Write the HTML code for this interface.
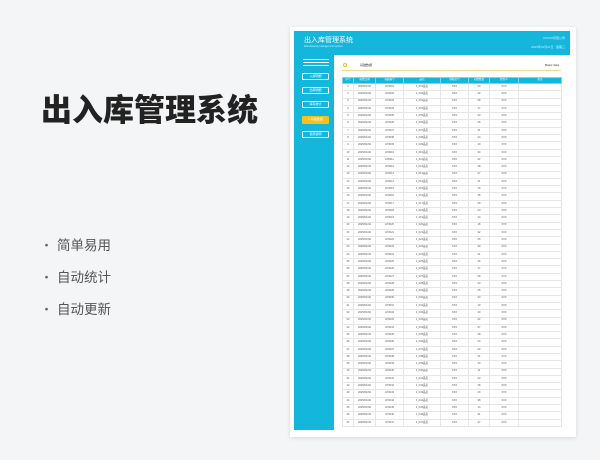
<!DOCTYPE html><html><head><meta charset="utf-8"><style>
*{margin:0;padding:0;box-sizing:border-box}
body{width:600px;height:460px;background:#f4f5f7;position:relative;overflow:hidden;font-family:"Liberation Sans","Noto Sans CJK SC",sans-serif}
.t{position:absolute;left:41px;top:85px;font-size:31px;font-weight:900;color:#222;font-family:"Noto Sans CJK SC",sans-serif}
.b{position:absolute;left:40px;font-size:13.5px;color:#555;font-family:"Noto Sans CJK SC",sans-serif}
.b span{display:inline-block;width:17px;font-size:13px;color:#666}
.card{position:absolute;left:290px;top:27px;width:286px;height:410px;background:#fff;box-shadow:0 1px 4px rgba(0,0,0,.12)}
.hd{position:absolute;left:294px;top:31px;width:276px;height:24px;background:#15b6dc}
.sb{position:absolute;left:294px;top:55px;width:40px;height:375px;background:#15b6dc}
.btn{position:absolute;left:302px;width:27px;height:7px;border:1px solid #fff;border-radius:1.5px;color:#fff;font-size:3px;text-align:center;line-height:5px}
table{position:absolute;left:342px;top:77px;width:219px;border-collapse:collapse;font-size:2.6px;color:#555;table-layout:fixed;line-height:1}
td,th{height:7.3px;border:0.4px solid #e6e6e6;text-align:center;font-weight:normal;white-space:nowrap;overflow:hidden;line-height:1}
th{background:#15b6dc;color:#fff;height:6px;border-color:#7fd6ec}
</style></head><body>
<div class="t">出入库管理系统</div>
<div class="b" style="top:234px"><span>•</span>简单易用</div>
<div class="b" style="top:266px"><span>•</span>自动统计</div>
<div class="b" style="top:298px"><span>•</span>自动更新</div>
<div class="card"></div>
<div class="hd"><div style="position:absolute;left:10px;top:4px;color:#fff;font-size:7px">出入库管理系统</div><div style="position:absolute;left:10px;top:14px;color:#cdeff8;font-size:2.5px">Warehousing management system</div><div style="position:absolute;right:5px;top:5px;color:#cdeff8;font-size:3px">XXXXX有限公司</div><div style="position:absolute;right:5px;top:14px;color:#cdeff8;font-size:3px">2025年01月01日 &nbsp; 星期三</div></div>
<div class="sb"></div>
<div style="position:absolute;left:303px;top:59px;width:26px;height:1px;background:#fff"></div>
<div style="position:absolute;left:303px;top:62px;width:26px;height:1px;background:#fff"></div>
<div style="position:absolute;left:303px;top:65px;width:26px;height:1px;background:#fff"></div>
<div class="btn" style="top:73px">入库明细</div>
<div class="btn" style="top:87px">出库明细</div>
<div class="btn" style="top:101px">库存统计</div>
<div class="btn" style="top:116px;background:#f5c21b;border-color:#f5c21b;height:8px">□ 基础数据</div>
<div class="btn" style="top:131px">使用说明</div>
<div style="position:absolute;left:343px;top:63px;width:4px;height:4px;border-radius:50%;border:1px solid #f5c21b"></div>
<div style="position:absolute;left:360px;top:63px;font-size:3px;color:#333">基础数据</div>
<div style="position:absolute;left:545px;top:63px;font-size:3px;color:#333">Basic data</div>
<div style="position:absolute;left:342px;top:70px;width:219px;height:1px;background:#f3dc8a"></div>
<table>
<colgroup><col style="width:11px"><col style="width:22px"><col style="width:28px"><col style="width:37px"><col style="width:28px"><col style="width:21px"><col style="width:29px"><col style="width:43px"></colgroup>
<tr><th>序号</th><th>初始日期</th><th>商品编号</th><th>品名</th><th>规格型号</th><th>初始数量</th><th>经办人</th><th>备注</th></tr>
<tr><td>1</td><td>2025/01/02</td><td>LP0001</td><td>1_001品名</td><td>XXX</td><td>29</td><td>XXX</td><td></td></tr>
<tr><td>2</td><td>2025/01/02</td><td>LP0002</td><td>1_002品名</td><td>XXX</td><td>42</td><td>XXX</td><td></td></tr>
<tr><td>3</td><td>2025/01/02</td><td>LP0003</td><td>1_003品名</td><td>XXX</td><td>28</td><td>XXX</td><td></td></tr>
<tr><td>4</td><td>2025/01/02</td><td>LP0004</td><td>1_004品名</td><td>XXX</td><td>17</td><td>XXX</td><td></td></tr>
<tr><td>5</td><td>2025/01/02</td><td>LP0005</td><td>1_005品名</td><td>XXX</td><td>43</td><td>XXX</td><td></td></tr>
<tr><td>6</td><td>2025/01/02</td><td>LP0006</td><td>1_006品名</td><td>XXX</td><td>26</td><td>XXX</td><td></td></tr>
<tr><td>7</td><td>2025/01/02</td><td>LP0007</td><td>1_007品名</td><td>XXX</td><td>31</td><td>XXX</td><td></td></tr>
<tr><td>8</td><td>2025/01/02</td><td>LP0008</td><td>1_008品名</td><td>XXX</td><td>24</td><td>XXX</td><td></td></tr>
<tr><td>9</td><td>2025/01/02</td><td>LP0009</td><td>1_009品名</td><td>XXX</td><td>19</td><td>XXX</td><td></td></tr>
<tr><td>10</td><td>2025/01/02</td><td>LP0010</td><td>1_010品名</td><td>XXX</td><td>34</td><td>XXX</td><td></td></tr>
<tr><td>11</td><td>2025/01/02</td><td>LP0011</td><td>1_011品名</td><td>XXX</td><td>22</td><td>XXX</td><td></td></tr>
<tr><td>12</td><td>2025/01/02</td><td>LP0012</td><td>1_012品名</td><td>XXX</td><td>38</td><td>XXX</td><td></td></tr>
<tr><td>13</td><td>2025/01/02</td><td>LP0013</td><td>1_013品名</td><td>XXX</td><td>27</td><td>XXX</td><td></td></tr>
<tr><td>14</td><td>2025/01/02</td><td>LP0014</td><td>1_014品名</td><td>XXX</td><td>41</td><td>XXX</td><td></td></tr>
<tr><td>15</td><td>2025/01/02</td><td>LP0015</td><td>1_015品名</td><td>XXX</td><td>16</td><td>XXX</td><td></td></tr>
<tr><td>16</td><td>2025/01/02</td><td>LP0016</td><td>1_016品名</td><td>XXX</td><td>35</td><td>XXX</td><td></td></tr>
<tr><td>17</td><td>2025/01/02</td><td>LP0017</td><td>1_017品名</td><td>XXX</td><td>29</td><td>XXX</td><td></td></tr>
<tr><td>18</td><td>2025/01/02</td><td>LP0018</td><td>1_018品名</td><td>XXX</td><td>23</td><td>XXX</td><td></td></tr>
<tr><td>19</td><td>2025/01/02</td><td>LP0019</td><td>1_019品名</td><td>XXX</td><td>44</td><td>XXX</td><td></td></tr>
<tr><td>20</td><td>2025/01/02</td><td>LP0020</td><td>1_020品名</td><td>XXX</td><td>18</td><td>XXX</td><td></td></tr>
<tr><td>21</td><td>2025/01/02</td><td>LP0021</td><td>1_021品名</td><td>XXX</td><td>32</td><td>XXX</td><td></td></tr>
<tr><td>22</td><td>2025/01/02</td><td>LP0022</td><td>1_022品名</td><td>XXX</td><td>26</td><td>XXX</td><td></td></tr>
<tr><td>23</td><td>2025/01/02</td><td>LP0023</td><td>1_023品名</td><td>XXX</td><td>39</td><td>XXX</td><td></td></tr>
<tr><td>24</td><td>2025/01/02</td><td>LP0024</td><td>1_024品名</td><td>XXX</td><td>21</td><td>XXX</td><td></td></tr>
<tr><td>25</td><td>2025/01/02</td><td>LP0025</td><td>1_025品名</td><td>XXX</td><td>36</td><td>XXX</td><td></td></tr>
<tr><td>26</td><td>2025/01/02</td><td>LP0026</td><td>1_026品名</td><td>XXX</td><td>17</td><td>XXX</td><td></td></tr>
<tr><td>27</td><td>2025/01/02</td><td>LP0027</td><td>1_027品名</td><td>XXX</td><td>28</td><td>XXX</td><td></td></tr>
<tr><td>28</td><td>2025/01/02</td><td>LP0028</td><td>1_028品名</td><td>XXX</td><td>43</td><td>XXX</td><td></td></tr>
<tr><td>29</td><td>2025/01/02</td><td>LP0029</td><td>1_029品名</td><td>XXX</td><td>25</td><td>XXX</td><td></td></tr>
<tr><td>30</td><td>2025/01/02</td><td>LP0030</td><td>1_030品名</td><td>XXX</td><td>33</td><td>XXX</td><td></td></tr>
<tr><td>31</td><td>2025/01/02</td><td>LP0031</td><td>1_031品名</td><td>XXX</td><td>19</td><td>XXX</td><td></td></tr>
<tr><td>32</td><td>2025/01/02</td><td>LP0032</td><td>1_032品名</td><td>XXX</td><td>40</td><td>XXX</td><td></td></tr>
<tr><td>33</td><td>2025/01/02</td><td>LP0033</td><td>1_033品名</td><td>XXX</td><td>22</td><td>XXX</td><td></td></tr>
<tr><td>34</td><td>2025/01/02</td><td>LP0034</td><td>1_034品名</td><td>XXX</td><td>37</td><td>XXX</td><td></td></tr>
<tr><td>35</td><td>2025/01/02</td><td>LP0035</td><td>1_035品名</td><td>XXX</td><td>28</td><td>XXX</td><td></td></tr>
<tr><td>36</td><td>2025/01/02</td><td>LP0036</td><td>1_036品名</td><td>XXX</td><td>24</td><td>XXX</td><td></td></tr>
<tr><td>37</td><td>2025/01/02</td><td>LP0037</td><td>1_037品名</td><td>XXX</td><td>22</td><td>XXX</td><td></td></tr>
<tr><td>38</td><td>2025/01/02</td><td>LP0038</td><td>1_038品名</td><td>XXX</td><td>41</td><td>XXX</td><td></td></tr>
<tr><td>39</td><td>2025/01/02</td><td>LP0039</td><td>1_039品名</td><td>XXX</td><td>33</td><td>XXX</td><td></td></tr>
<tr><td>40</td><td>2025/01/02</td><td>LP0040</td><td>1_040品名</td><td>XXX</td><td>11</td><td>XXX</td><td></td></tr>
<tr><td>41</td><td>2025/01/02</td><td>LP0041</td><td>1_041品名</td><td>XXX</td><td>22</td><td>XXX</td><td></td></tr>
<tr><td>42</td><td>2025/01/02</td><td>LP0042</td><td>1_042品名</td><td>XXX</td><td>28</td><td>XXX</td><td></td></tr>
<tr><td>43</td><td>2025/01/02</td><td>LP0043</td><td>1_043品名</td><td>XXX</td><td>29</td><td>XXX</td><td></td></tr>
<tr><td>44</td><td>2025/01/02</td><td>LP0044</td><td>1_044品名</td><td>XXX</td><td>38</td><td>XXX</td><td></td></tr>
<tr><td>45</td><td>2025/01/02</td><td>LP0045</td><td>1_045品名</td><td>XXX</td><td>14</td><td>XXX</td><td></td></tr>
<tr><td>46</td><td>2025/01/02</td><td>LP0046</td><td>1_046品名</td><td>XXX</td><td>31</td><td>XXX</td><td></td></tr>
<tr><td>47</td><td>2025/01/02</td><td>LP0047</td><td>1_047品名</td><td>XXX</td><td>47</td><td>XXX</td><td></td></tr>
</table>
<div style="position:absolute;left:290px;top:430px;width:286px;height:7px;background:#fff"></div>
</body></html>
